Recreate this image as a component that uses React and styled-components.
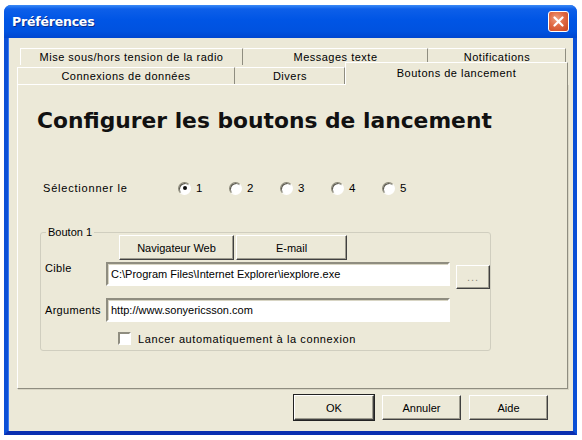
import React from "react";
import styled, { createGlobalStyle } from "styled-components";

const Global = createGlobalStyle`
  html, body {
    margin: 0;
    padding: 0;
    background: #fff;
  }
  body {
    font-family: "Liberation Sans", Arial, sans-serif;
    font-size: 11px;
    color: #000;
  }
`;

const Window = styled.div`
  margin: 5px 0 0 4px;
  width: 573px;
  height: 430px;
  display: flex;
  flex-direction: column;
  border-radius: 7px 7px 0 0;
  overflow: hidden;
  background: #0a4fd8;
`;

const TitleBar = styled.div`
  height: 33px;
  flex: none;
  display: flex;
  align-items: center;
  justify-content: space-between;
  padding: 0 8px 0 8px;
  background: linear-gradient(
    to bottom,
    #3b8af6 0%,
    #0d5fe9 12%,
    #0055e5 45%,
    #0052df 80%,
    #0047d0 100%
  );
`;

const Title = styled.span`
  color: #fff;
  font-family: "DejaVu Sans", Verdana, sans-serif;
  font-weight: bold;
  font-size: 12.5px;
  letter-spacing: -0.2px;
  text-shadow: 1px 1px 0 #0b2f8c;
`;

const CloseBtn = styled.div`
  width: 19px;
  height: 19px;
  border: 1px solid #fff;
  border-radius: 3px;
  background: radial-gradient(circle at 40% 35%, #f0a080 0%, #e06a44 45%, #c8441e 100%);
  display: flex;
  align-items: center;
  justify-content: center;
  margin-top: -1px;
`;

const Body = styled.div`
  flex: 1;
  display: flex;
  flex-direction: column;
  background: #ece9d8;
  border-left: 4px solid #0b4fd6;
  border-right: 4px solid #0b4fd6;
  border-bottom: 4px solid #0a2fb0;
  box-shadow: inset 1px 0 0 #3a7af0;
  padding: 10px 5px 0 9px;
`;

const TabStrip = styled.div`
  display: flex;
  flex-direction: column;
`;

const TabRow = styled.div`
  display: flex;
  padding-left: ${(p) => p.$indent || 0}px;
  height: ${(p) => p.$h}px;
  align-items: flex-end;
`;

const Tab = styled.div`
  width: ${(p) => p.$w}px;
  height: ${(p) => (p.$active ? 23 : 17)}px;
  box-sizing: border-box;
  display: flex;
  justify-content: center;
  align-items: ${(p) => (p.$active ? "flex-start" : "center")};
  padding-top: ${(p) => (p.$active ? 4 : 0)}px;
  border-top: 1px solid #fff;
  border-left: 1px solid ${(p) => (p.$first || p.$active ? "#fff" : "transparent")};
  border-right: 1px solid #8f8d80;
  background: #ece9d8;
  white-space: nowrap;
  letter-spacing: 0.5px;
  position: relative;
  z-index: ${(p) => (p.$active ? 2 : 1)};
  margin-bottom: ${(p) => (p.$active ? -1 : 0)}px;
`;

const Panel = styled.div`
  width: 551px;
  height: 305px;
  box-sizing: border-box;
  border-top: 1px solid #fff;
  border-left: 1px solid #fff;
  border-right: 1px solid #8f8d80;
  border-bottom: 1px solid #8f8d80;
  box-shadow: 1px 1px 0 #d8d5c4;
  display: flex;
  flex-direction: column;
  padding: 0 0 0 19px;
`;

const Heading = styled.h1`
  margin: 23px 0 0 0;
  font-family: "DejaVu Sans", Verdana, sans-serif;
  font-size: 21.8px;
  line-height: 26px;
  font-weight: bold;
  color: #111;
`;

const SelectRow = styled.div`
  display: flex;
  align-items: center;
  margin: 46px 0 0 6px;
  height: 16px;
`;

const SelectLabel = styled.span`
  width: 135px;
  letter-spacing: 0.8px;
`;

const RadioItem = styled.label`
  display: flex;
  align-items: center;
  gap: 5px;
  width: 51px;
  font-size: 11.5px;
`;

const Radio = styled.span`
  width: 11px;
  height: 11px;
  border-radius: 50%;
  border: 1px solid;
  border-color: #8a8878 #fff #fff #8a8878;
  background: radial-gradient(circle at 60% 60%, #fff 0%, #fff 55%, #e6e3d4 100%);
  box-shadow: inset 1px 1px 0 #5a584e;
  display: flex;
  align-items: center;
  justify-content: center;
  &::after {
    content: "";
    width: 4px;
    height: 4px;
    border-radius: 50%;
    background: ${(p) => (p.$checked ? "#111" : "transparent")};
  }
`;

const Group = styled.fieldset`
  margin: 30px 0 0 3px;
  width: 442px;
  height: 125px;
  box-sizing: border-box;
  border: 1px solid #d0cebf;
  border-radius: 3px;
  padding: 0 0 0 4px;
  display: flex;
  flex-direction: column;
`;

const Legend = styled.legend`
  padding: 0 2px;
  margin-left: 1px;
`;

const ButtonRow = styled.div`
  display: flex;
  gap: 2px;
  margin: -3px 0 0 74px;
`;

const Button = styled.button`
  width: ${(p) => p.$w}px;
  height: ${(p) => p.$h || 25}px;
  box-sizing: border-box;
  font-family: "Liberation Sans", Arial, sans-serif;
  font-size: 11px;
  color: ${(p) => (p.$muted ? "#8f8d80" : "#000")};
  background: #ece9d8;
  border: 1px solid;
  border-color: #fff #404040 #404040 #fff;
  box-shadow: inset -1px -1px 0 #9d9b8e;
  outline: ${(p) => (p.$default ? "1px solid #222" : "none")};
  outline-offset: 0;
  padding: 0;
  letter-spacing: ${(p) => (p.$muted ? "1px" : "0")};
`;

const FieldRow = styled.div`
  display: flex;
  align-items: ${(p) => p.$align || "center"};
  margin-top: ${(p) => p.$mt}px;
`;

const FieldLabel = styled.span`
  width: 61px;
  flex: none;
  letter-spacing: 0.3px;
`;

const Input = styled.div`
  width: 344px;
  height: 24px;
  box-sizing: border-box;
  background: #fff;
  border: 2px solid;
  border-color: #8f8d80 #fff #fff #8f8d80;
  box-shadow: inset 1px 1px 0 #d8d5c4;
  display: flex;
  align-items: center;
  padding-left: 3px;
  white-space: nowrap;
`;

const BrowseGap = styled.div`
  width: 6px;
`;

const CheckRow = styled.label`
  display: flex;
  align-items: center;
  gap: 7px;
  margin: 10px 0 0 73px;
  letter-spacing: 0.6px;
`;

const Check = styled.span`
  width: 13px;
  height: 13px;
  box-sizing: border-box;
  background: #fff;
  border: 2px solid;
  border-color: #8f8d80 #fff #fff #8f8d80;
`;

const Footer = styled.div`
  display: flex;
  justify-content: flex-end;
  gap: 8px;
  padding: 6px 20px 0 0;
`;

function App() {
  const radios = [1, 2, 3, 4, 5];
  return (
    <>
      <Global />
      <Window>
        <TitleBar>
          <Title>Préférences</Title>
          <CloseBtn>
            <svg width="11" height="11" viewBox="0 0 11 11">
              <path d="M1.5 1.5 L9.5 9.5 M9.5 1.5 L1.5 9.5" stroke="#fff" strokeWidth="2.2" strokeLinecap="round" />
            </svg>
          </CloseBtn>
        </TitleBar>
        <Body>
          <TabStrip>
            <TabRow $indent={3} $h={17}>
              <Tab $w={223} $first>Mise sous/hors tension de la radio</Tab>
              <Tab $w={185}>Messages texte</Tab>
              <Tab $w={138}>Notifications</Tab>
            </TabRow>
            <TabRow $h={19}>
              <Tab $w={218} $first>Connexions de données</Tab>
              <Tab $w={110}>Divers</Tab>
              <Tab $w={223} $active>Boutons de lancement</Tab>
            </TabRow>
          </TabStrip>
          <Panel>
            <Heading>Configurer les boutons de lancement</Heading>
            <SelectRow>
              <SelectLabel>Sélectionner le</SelectLabel>
              {radios.map((n) => (
                <RadioItem key={n}>
                  <Radio $checked={n === 1} />
                  {n}
                </RadioItem>
              ))}
            </SelectRow>
            <Group>
              <Legend>Bouton 1</Legend>
              <ButtonRow>
                <Button $w={115}>Navigateur Web</Button>
                <Button $w={111}>E-mail</Button>
              </ButtonRow>
              <FieldRow $mt={2} $align="flex-start">
                <FieldLabel>Cible</FieldLabel>
                <Input>C:\Program Files\Internet Explorer\iexplore.exe</Input>
                <BrowseGap />
                <Button $w={34} $h={24} $muted style={{ marginTop: 3 }}>...</Button>
              </FieldRow>
              <FieldRow $mt={9}>
                <FieldLabel>Arguments</FieldLabel>
                <Input>http://www.sonyericsson.com</Input>
              </FieldRow>
              <CheckRow>
                <Check />
                Lancer automatiquement à la connexion
              </CheckRow>
            </Group>
          </Panel>
          <Footer>
            <Button $w={80} $default>OK</Button>
            <Button $w={79}>Annuler</Button>
            <Button $w={79}>Aide</Button>
          </Footer>
        </Body>
      </Window>
    </>
  );
}

export default App;
